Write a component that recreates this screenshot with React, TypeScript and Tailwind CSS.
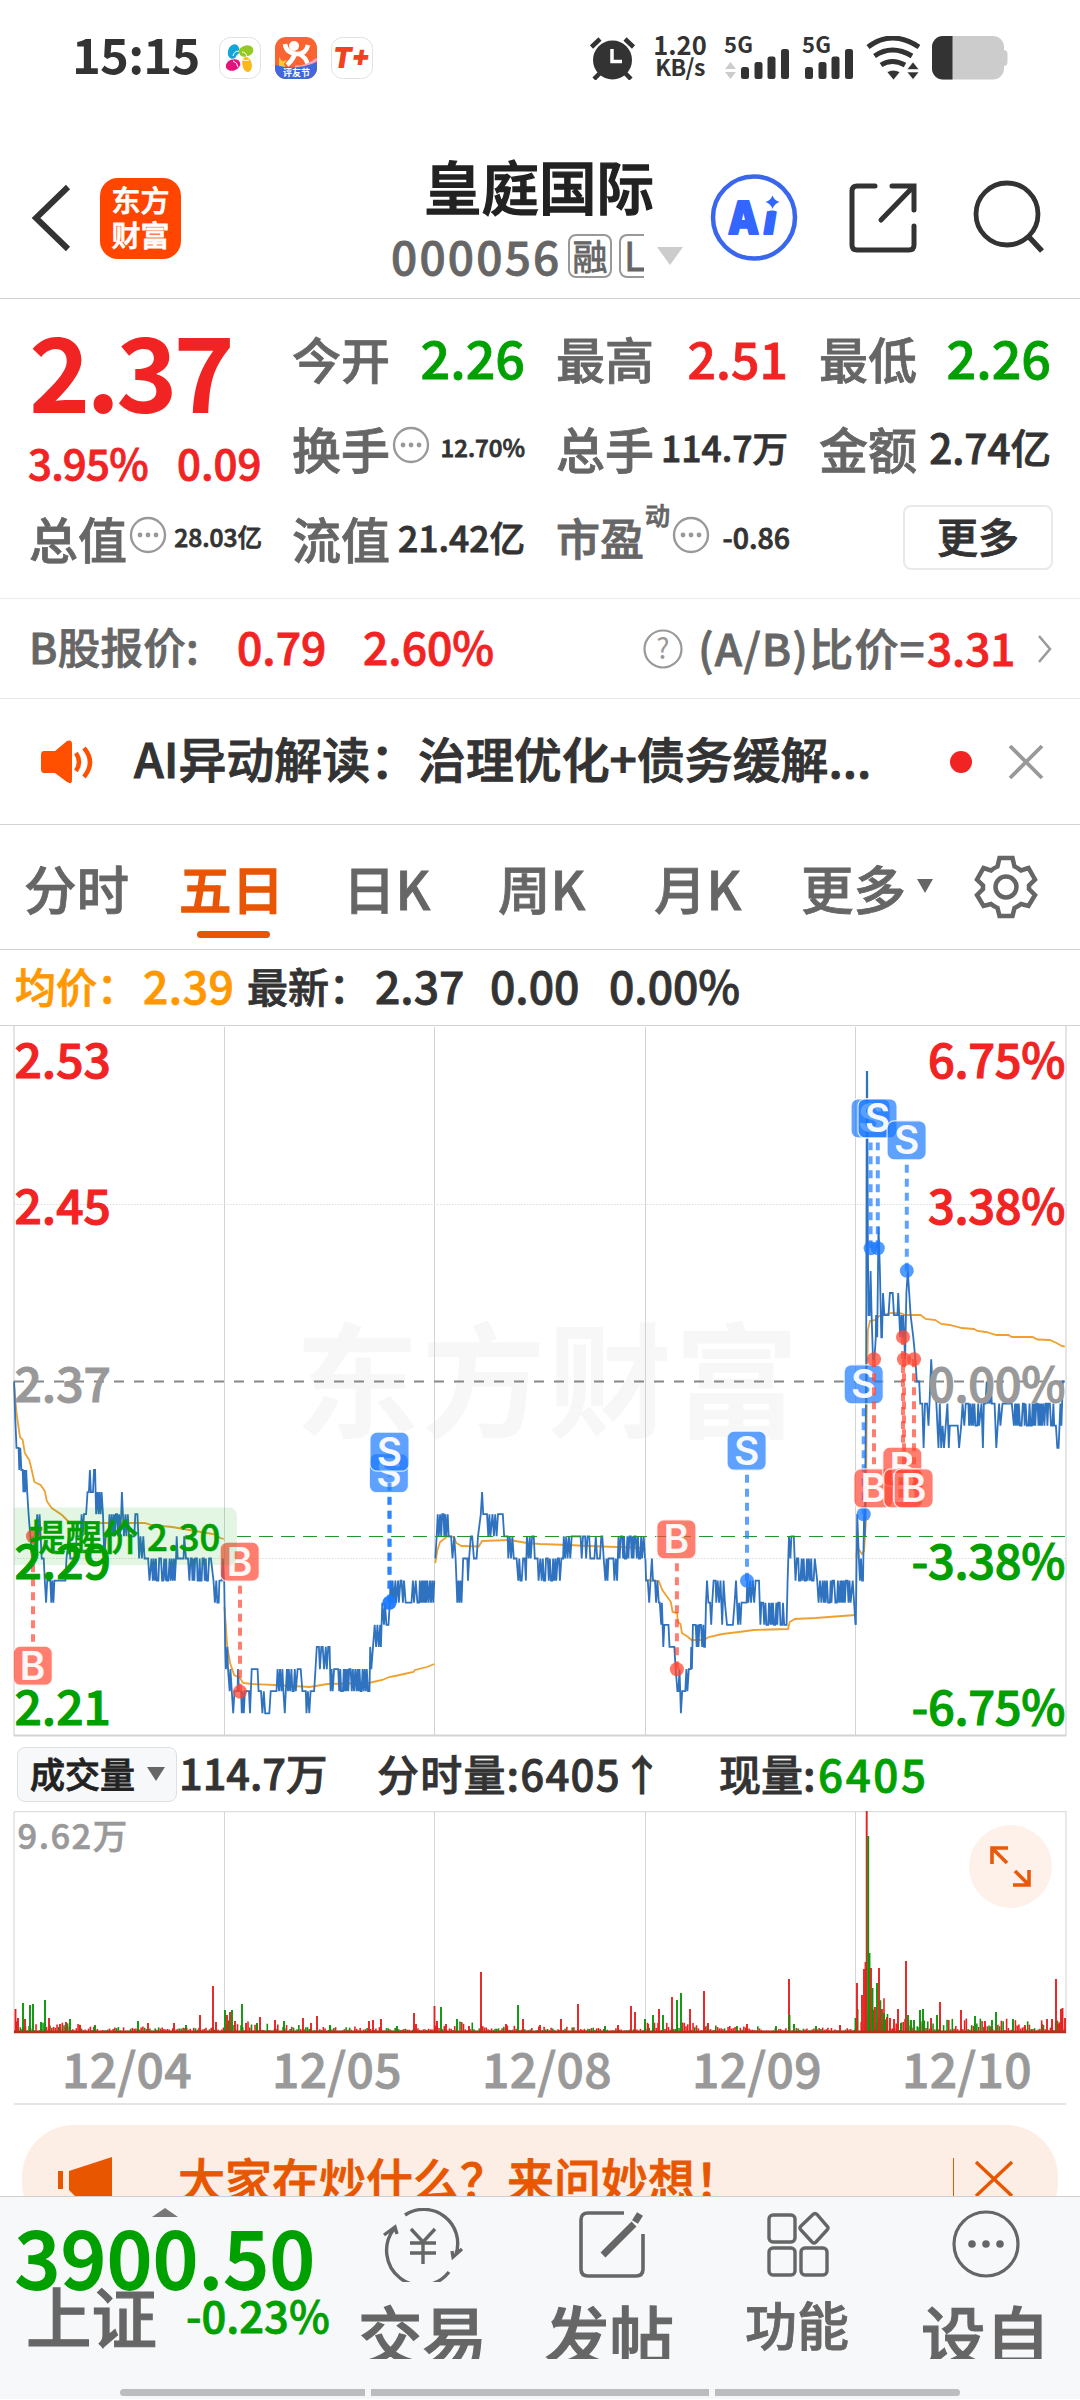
import React from "react";

type Pt = [number, number];

// horizontal chart unit (price series x values) in pixels
const UNIT = 1080 / 3136;
const MID = 1568;

const rand = (n: number) => Math.abs(Math.sin(n * 12.9898) * 43758.5453) % 1;

// price flicking between two neighbouring cents
const zig = (from: number, to: number, a: number, b: number): Pt[] => {
	const out: Pt[] = [];
	let top = true;
	let x = from;
	while (x <= to) {
		const y = top ? a : b;
		out.push([x, y]);
		const r = rand(x + a);
		if (r > 0.78 && x + 4 <= to) {
			x += 3 + (r - 0.78) * 12;
			out.push([Math.min(x, to), y]);
		}
		x += 2.2 + rand(x * 3 + b) * 1.6;
		top = !top;
	}
	return out;
};

const right = (pts: Pt[]): Pt[] => pts.map(([x, y]) => [x + MID, y]);

// [x, cents below 2.37]
const day1: Pt[] = [
	[41, 0], [44, 1.6], [48, 3], [54, 3], [56, 4], [59, 3], [62, 4], [66, 4], [68, 5], [71, 4], [73, 5], [76, 4],
	[79, 5], [83, 6], [88, 7], [93, 8], [104, 7], [108, 6], [112, 7], [115, 6], [118, 7], [121, 8], [127, 8],
	[130, 9], [134, 10], [137, 9], [146, 9], [149, 10], [152, 9], [155, 10], [158, 9], [190, 9], [193, 8],
	[200, 7], [204, 8], [220, 8], [222, 7], [234, 7], [237, 6], [240, 7], [244, 6], [250, 6], [254, 5],
	[258, 5], [261, 4], [264, 5], [270, 5], [273, 4], [276, 4], [279, 6], [283, 5], [286, 6], [289, 5],
	[292, 6], [295, 5], [299, 6], [303, 8], [307, 7], [315, 7],
	...zig(318, 350, 6, 7), [352, 6], [354, 5], [357, 6], [360, 7], [364, 6], [367, 7], [371, 6], [375, 7],
	[390, 7], [393, 6], [399, 6], [402, 7], [404, 8], [408, 7], [412, 8], [416, 7], [420, 8], [430, 8],
	[434, 9], [440, 8], ...zig(444, 508, 9, 8), [511, 8], [513, 7], [516, 8], [533, 8], [535, 7], [540, 8], [546, 8],
	...zig(550, 614, 9, 8), [620, 9], [624, 10], [628, 9], [631, 10], [635, 10], [637, 9], [644, 9], [647, 8], [650, 9],
];

const day2: Pt[] = [
	[651, 9], [654, 12], [656, 13], [660, 12], [662, 13], [667, 14], [669, 13], [673, 14], [677, 15], [681, 14],
	[690, 14], [691, 13], [694, 14], [700, 14], [702, 15], [705, 14], [708, 15], [711, 14], [723, 14], [726, 15],
	[731, 13], [736, 13], [740, 13], [748, 13], [751, 14], [758, 14], [762, 15], [766, 14], [770, 15], [782, 15],
	[786, 14], [803, 14], [806, 13], [810, 14], [813, 13], [817, 14], [820, 13], [823, 14], [827, 15], [830, 14],
	...zig(833, 860, 13, 14), [864, 13], [873, 13], [878, 14], [888, 14], [890, 15], [894, 14], [898, 15], [902, 14],
	[912, 14], [916, 13], [920, 12], [926, 12], [929, 13], [933, 12], [937, 12], [941, 13], [946, 12], [949, 13],
	[953, 12], [957, 12], [960, 14], [963, 13], [966, 14], [970, 13], [982, 13], ...zig(985, 1071, 14, 13),
	[1073, 14], [1075, 12], [1078, 13], [1083, 12], [1088, 11], [1092, 12], [1096, 11], [1100, 12], [1104, 11],
	[1106, 12], [1110, 10], [1115, 11], [1118, 10], [1122, 11], [1128, 11], [1132, 10], [1134, 9], [1137, 10],
	[1140, 9], [1143, 10], [1148, 9], [1150, 10], [1156, 9], [1158, 10], [1163, 9], [1166, 9], [1170, 10], [1173, 9],
	[1178, 10], [1195, 10], [1199, 9], [1202, 10], [1207, 9], [1212, 10], [1217, 10], ...zig(1219, 1256, 9, 10), [1258, 10], [1261, 9],
];

const day3: Pt[] = [
	[1264, 8], [1268, 7], [1271, 6], [1274, 7], [1278, 6], [1281, 7], [1284, 6], [1288, 6], [1290, 7], [1293, 6],
	[1296, 7], [1300, 6], [1303, 7], [1310, 7], [1314, 8], [1319, 7], [1323, 8], [1328, 10], [1331, 9], [1334, 10],
	[1337, 9], [1340, 10], [1345, 8], [1357, 8], [1359, 9], [1362, 8], [1367, 7], [1371, 7], [1376, 8], [1384, 8],
	[1388, 7], [1396, 6], [1400, 5], [1403, 6], [1414, 6], [1418, 7], [1421, 6], [1424, 7], [1430, 6], [1434, 7],
	[1438, 6], [1442, 7], [1446, 6], [1460, 6], [1464, 7], [1474, 7], [1476, 8], [1480, 7], [1484, 8], [1488, 7],
	[1492, 8], [1500, 8], [1505, 9], [1508, 8], [1511, 9], [1515, 9], [1519, 8], [1524, 8], [1527, 9], [1530, 7],
	[1535, 8], [1538, 7], [1541, 8], [1545, 7], [1550, 7], [1553, 8], [1561, 8], [1564, 9],
	...right([
		[1, 8], ...zig(5, 60, 9, 8), [62, 8], [67, 8], [69, 7], [73, 8], [76, 7], [80, 8], [84, 7], [88, 8], [92, 7],
		[118, 7], [121, 8], [125, 7], [131, 7], [134, 8], [138, 7], [143, 7], [146, 8], [158, 8], [162, 7], [166, 8],
		[174, 8], [178, 7], [181, 7], [185, 8], [190, 9], [193, 8], [196, 9], [199, 8], [213, 8], [216, 9], [220, 8],
		[224, 9], [228, 7], ...zig(231, 300, 8, 7), [301, 7], [305, 8],
	]),
];

const day4: Pt[] = right([
	[306, 8], [308, 9], [313, 9], [317, 10], [321, 9], [325, 8], [328, 9], [334, 9], [337, 10], [341, 9], [345, 10],
	[348, 10], [352, 11], [354, 10], [358, 12], [361, 11], [373, 11], [376, 12], [390, 12], [394, 13], [399, 14],
	[402, 14], [405, 13], [409, 15], [413, 14], [422, 14], [425, 13], [428, 14], [432, 13], [438, 13], [439, 12],
	[441, 13], [444, 11], [452, 11], ...zig(455, 478, 12, 11), [479, 12], [482, 10], [485, 9], [489, 10], [494, 10],
	[497, 11], [500, 10], [504, 9], [510, 9], [512, 10], [516, 9], [520, 10], [524, 9], [529, 11], [533, 9],
	[537, 10], [543, 11], [560, 11], [565, 10], [569, 9], [572, 10], [575, 11], [578, 10], [582, 11], [585, 10],
	[600, 10], [602, 9], [605, 10], [610, 9], [613, 10], [618, 9], [622, 10], [626, 9], [636, 9], [640, 11],
	[643, 10], [648, 10], ...zig(651, 712, 11, 10), [716, 11], [719, 9], [721, 8], [723, 7], [727, 8], [730, 7],
	[737, 7], [742, 9], [746, 8], [750, 8], ...zig(752, 801, 9, 8), [805, 9], [809, 10], [813, 9],
	[817, 10], ...zig(821, 905, 9, 10), [908, 9], [912, 10], [916, 11],
]);

const day5: Pt[] = right([
	[917, 11], [921, 6], [926, 8], [929, 9], [932, 8], [935, 9], [938, 9], [941, 6], [943, 7], [947, 0], [949, -14],
	[950, -14], [952, -6], [954, -3], [957, -3], [960, -5], [963, -3], [967, -1], [971, -1], [975, -2], [976, -3], [979, -2],
	[983, -7], [987, -5], [991, -2], [993, -2], [996, -4], [1000, -3], [1012, -3], [1016, -4], [1024, -4],
	[1028, -3], [1038, -3], [1040, -4], [1043, -3], [1046, -2], [1049, -3], [1053, -2], [1055, -3], [1060, -1], [1064, -4],
	[1068, -5], [1072, -4], [1076, -3], [1084, -2], [1090, -1], [1094, 0], [1101, 0], [1104, 1], [1110, 1],
	[1114, 3], [1118, 1], [1124, 1], [1128, 2], [1131, 1], [1136, -1], [1139, 0], [1146, 0], [1151, 1], [1154, 2],
	[1157, 3], [1161, 1], [1165, 3], [1169, 2], [1173, 3], [1178, 2], [1183, 1], [1187, 3], [1190, 2], [1213, 2], [1217, 3],
	[1223, 2], [1227, 1], [1232, 2], [1236, 1], [1244, 1], ...zig(1246, 1276, 2, 1), [1282, 1], [1286, 3], [1289, 1],
	[1294, 1], [1297, 0], [1300, 1], [1303, 0], [1306, 1], [1309, 0], [1312, 1], [1320, 1], [1325, 3], [1329, 2], [1333, 1], [1337, 2],
	[1343, 1], [1370, 1], ...zig(1376, 1494, 2, 1), [1498, 2], [1502, 3], [1506, 3], [1511, 1], [1514, 2], [1518, 0],
	[1524, 0],
]);

// [x, y pixel] of the average price
const avg: Pt[][] = [
	[[41, 1384], [48, 1413], [58, 1437], [66, 1440], [72, 1453], [85, 1460], [92, 1470], [100, 1482], [118, 1485], [130, 1491], [136, 1501], [150, 1508], [180, 1515], [200, 1522], [300, 1523], [420, 1523], [440, 1525], [500, 1527], [550, 1530], [600, 1533], [620, 1534], [640, 1538], [650, 1539]],
	[[652, 1607], [660, 1647], [668, 1663], [680, 1675], [697, 1678], [706, 1683], [730, 1684], [800, 1685], [900, 1687], [950, 1684], [1070, 1683], [1110, 1680], [1130, 1677], [1160, 1675], [1200, 1672], [1205, 1670], [1240, 1667], [1261, 1664]],
	[[1264, 1563], [1270, 1550], [1278, 1542], [1300, 1536], [1318, 1537], [1325, 1543], [1340, 1546], [1390, 1546.5], [1400, 1541], [1480, 1540], [1530, 1543], [1568, 1544], [1650, 1545], [1710, 1546], [1868, 1548]],
	right([[308, 1580], [345, 1581], [355, 1590], [380, 1602], [385, 1612], [398, 1613], [400, 1622], [408, 1624], [412, 1633], [430, 1637], [440, 1640], [476, 1640], [490, 1637], [530, 1634], [600, 1631], [620, 1630], [720, 1629], [725, 1622], [740, 1619], [800, 1618], [916, 1615]]),
	right([[918, 1558], [921, 1547], [935, 1554], [941, 1551], [946, 1523], [949, 1400], [952, 1330], [958, 1321], [975, 1320], [985, 1316], [1020, 1313], [1050, 1313.5], [1060, 1315], [1105, 1315], [1120, 1319], [1148, 1320], [1165, 1324], [1190, 1325], [1225, 1328], [1260, 1329], [1270, 1331], [1295, 1332], [1325, 1335], [1360, 1335], [1370, 1337], [1430, 1337], [1445, 1339.5], [1480, 1340], [1500, 1343], [1515, 1346], [1524, 1346.5]]),
];

const pricePath = (pts: Pt[]) =>
	pts.map(([x, n]) => `${(x * UNIT).toFixed(1)},${(1381.5 + n * 22.12).toFixed(1)}`).join(" ");
const avgPath = (pts: Pt[]) => pts.map(([x, y]) => `${(x * UNIT).toFixed(1)},${y}`).join(" ");

// kind, dot x, dot y, badge x, badge y
const trades: [string, number, number, number, number][] = [
	["B", 33, 1536.3, 32.7, 1665.7],
	["B", 240, 1691.7, 239.7, 1561.7],
	["S", 389.5, 1602.7, 388.9, 1473.2],
	["S", 389.5, 1602.7, 389.5, 1451.7],
	["B", 676.9, 1669.3, 676.4, 1539.3],
	["S", 747, 1580.7, 746.6, 1450.7],
	["S", 870.6, 1248.3, 870.6, 1118.4],
	["S", 877.8, 1248.3, 877.5, 1118.4],
	["S", 906.8, 1270.7, 906.6, 1140.3],
	["S", 863.7, 1514.3, 863.7, 1384.3],
	["B", 874, 1359.3, 873.4, 1488.3],
	["B", 903, 1337, 902.3, 1466.7],
	["B", 904, 1359.3, 903.3, 1488.3],
	["B", 914, 1359.3, 913.6, 1488.3],
];

const Trade = ({ t }: { t: [string, number, number, number, number] }) => {
	const [kind, dx, dy, bx, by] = t;
	const color = kind === "S" ? "#1b79ff" : "#ff4733";
	const off = by < dy ? 24 : -24;
	return (
		<g>
			<line x1={dx} y1={dy} x2={dx} y2={by + off} stroke={color} strokeOpacity="0.7" strokeWidth="4" strokeDasharray="8 6" />
			<circle cx={dx} cy={dy} r="7" fill={color} fillOpacity="0.75" />
			<rect x={bx - 19.5} y={by - 19.5} width="39" height="39" rx="7" fill={color} fillOpacity="0.7" stroke="#fff" strokeOpacity="0.8" strokeWidth="1.2" />
			<text x={bx} y={by + 14} textAnchor="middle" fontFamily="Inter, sans-serif" fontSize="39" fontWeight="600" fill="#fff" fillOpacity="0.95">
				{kind}
			</text>
		</g>
	);
};

const axis: [string, number, string][] = [
	["2.53", 1077.7, "#f12323"],
	["2.45", 1223.5, "#f12323"],
	["2.37", 1402, "#999"],
	["2.29", 1579, "#00a000"],
	["2.21", 1725, "#00a000"],
];
const axisRight = ["6.75%", "3.38%", "0.00%", "-3.38%", "-6.75%"];

const PriceChart = () => (
	<svg className="block" width="1080" height="711" viewBox="0 1026 1080 711">
		<text x="295" y="1428" fontSize="124" letterSpacing="2.5" fontWeight="700" fill="#f7f7f7">
			东方财富
		</text>
		<g stroke="#d3d3d3" fill="none">
			<path d="M14 1026V1736M1066 1026V1736" strokeWidth="1.5" stroke="#ddd" />
			<path d="M224.5 1027V1736M434.5 1027V1736M645.5 1027V1736M855.5 1027V1736" />
			<path d="M14 1735.5H1066" strokeWidth="2" />
			<path d="M14 1204.5H1066M14 1558.5H1066" strokeDasharray="1.5 1.5" stroke="#ddd" />
		</g>
		<path d="M14 1381.5H1066" stroke="#888" strokeWidth="2" strokeDasharray="10 10" />
		{avg.map((d, i) => (
			<polyline key={i} points={avgPath(d)} fill="none" stroke="#eea12e" strokeWidth="1.8" />
		))}
		{[day1, day2, day3, day4, day5].map((d, i) => (
			<polyline key={i} points={pricePath(d)} fill="none" stroke="#2f72bf" strokeWidth="1.8" />
		))}
		<path d="M237 1536.5H1066" stroke="#1f9a2a" strokeWidth="1.2" strokeDasharray="14 8" />
		{trades.map((t, i) => (
			<Trade key={i} t={t} />
		))}
		<path d="M14 1507.5H229a8 8 0 0 1 8 8V1557a8 8 0 0 1-8 8H14Z" fill="#00a000" fillOpacity="0.11" />
		<g fontWeight="500" fontSize="48" strokeWidth="1.1">
			<text x="29" y="1550.5" fontSize="36.6" fill="#00a000" stroke="#00a000" strokeWidth="0.6">
				提醒价 2.30
			</text>
			{axis.map(([label, y, fill], i) => (
				<g key={label} fill={fill} stroke={fill}>
					<text x="14.5" y={y}>{label}</text>
					<text x="1065" y={y} textAnchor="end" fontSize="47" letterSpacing="-0.3">{axisRight[i]}</text>
				</g>
			))}
		</g>
	</svg>
);

// [x, height, green]
const spikes: [number, number, number][] = [
	[15.5, 24, 0], [18, 15, 0], [23, 30, 1], [25, 14, 0], [30, 28, 1], [33, 29, 1], [41, 11, 1], [45, 33, 1], [49, 15, 0],
	[60, 9, 0], [66, 11, 0], [70, 14, 1], [80, 8, 0], [95, 8, 1], [138, 12, 1], [148, 10, 0], [174, 10, 0], [186, 8, 1],
	[200, 18, 0], [213, 47, 0], [216, 11, 0], [225, 23, 1], [227, 18, 0], [230, 21, 0], [232, 23, 1], [235, 12, 0],
	[242, 29, 1], [246, 10, 0], [257, 10, 1], [260, 16, 0], [275, 13, 0], [284, 12, 1], [303, 15, 0], [311, 10, 0],
	[317, 17, 0], [330, 8, 1], [369, 12, 0], [373, 13, 0], [381, 14, 0], [397, 7, 1], [414, 20, 0], [416, 9, 0],
	[434.5, 27, 0], [437, 12, 0], [441, 26, 1], [446, 9, 0], [457, 14, 1], [469, 7, 0], [481, 61, 0], [506, 9, 0],
	[518, 28, 1], [523, 14, 0], [540, 8, 0], [561, 14, 0], [578, 29, 0], [605, 7, 1], [618, 8, 0], [631, 27, 0], [635, 21, 0],
	[645, 14, 1], [648, 9, 0], [653, 18, 1], [659, 24, 0], [663, 18, 1], [672, 36, 0], [677, 33, 1], [681, 40, 1],
	[690, 24, 0], [704, 42, 0], [708, 10, 0], [737, 7, 1], [747, 9, 0], [776, 7, 1], [789, 54, 0], [789.5, 18, 1], [794, 9, 1], [816, 7, 1],
	[840, 8, 0], [855.5, 15, 1], [857, 50, 0], [862, 38, 0], [864, 64, 0], [865.5, 71, 0], [866.7, 222, 0], [868.2, 197, 1], [869.5, 80, 1],
	[871, 65, 0], [872.5, 45, 1], [875, 26, 0], [877, 50, 1], [879, 65, 0], [882, 24, 0], [884, 20, 1], [887, 16, 0],
	[890, 15, 0], [894, 14, 0], [898, 24, 0], [901, 10, 1], [906, 72, 0], [908, 18, 1], [911, 13, 1], [914, 13, 1], [920, 23, 1],
	[923, 24, 1], [931, 15, 0], [937, 18, 1], [940, 31, 0], [961, 23, 0], [975, 17, 1], [985, 12, 0], [992, 13, 1], [996, 21, 1],
	[1013, 14, 1], [1025, 8, 0], [1042, 9, 0], [1047, 14, 0], [1052, 14, 0], [1056, 54, 0], [1059, 9, 0], [1061, 24, 0], [1062.5, 25, 0], [1065, 15, 0],
];

// small bars along the baseline, higher around each open
const noise = Array.from({ length: 600 }, (_, i) => {
	const x = 15 + i * 1.752;
	const r = rand(i);
	const g = rand(i * 6.02 + 3);
	const pos = ((x - 14) % 210.4) / 210.4;
	let top = 3 + (1 - pos) * (1 - pos) * 8;
	if (x > 856) top = x < 890 ? 34 : 12;
	return { x, h: 2.5 + r * r * top, green: g > 0.68 };
});

const VolumeChart = () => (
	<svg className="block" width="1080" height="224" viewBox="0 1811 1080 224">
		<g stroke="#d6d6d6" fill="none">
			<path d="M14 1811.5H1066V2033M14 1811.5V2033" strokeWidth="1.3" stroke="#ddd" />
			<path d="M224.5 1812V2033M434.5 1812V2033M645.5 1812V2033M855.5 1812V2033" />
		</g>
		{noise.map((b, i) => (
			<path key={i} d={`M${b.x} 2033v${-b.h}`} stroke={b.green ? "#0a960a" : "#e82020"} strokeWidth="1.6" />
		))}
		{spikes.map(([x, h, green], i) => (
			<path key={i} d={`M${x} 2033v${-h}`} stroke={green ? "#0a960a" : "#e82020"} strokeWidth="1.9" />
		))}
		<path d="M14 2032H1066" stroke="#b5301c" strokeWidth="2.4" />
		<text x="17.5" y="1849" fontWeight="500" fontSize="34.5" letterSpacing="1.5" fill="#999" stroke="#999" strokeWidth="0.6">
			9.62万
		</text>
		<circle cx="1010.5" cy="1866.5" r="41.5" fill="#fdf1e9" />
		<path d="M992 1864V1848H1008M992 1848L1007 1863M1029 1870V1885H1013M1029 1885L1015 1871" fill="none" stroke="#e8590c" strokeWidth="3.6" />
	</svg>
);

const Bars = () => (
	<g fill="#333">
		<rect x="0" y="31" width="8" height="12" rx="2.5" />
		<rect x="13.5" y="26" width="8" height="17" rx="2.5" />
		<rect x="26.5" y="20.5" width="8" height="22.5" rx="2.5" />
		<rect x="40" y="13" width="8" height="30" rx="2.5" />
	</g>
);

const StatusBar = () => (
	<div className="flex h-[115px] items-center text-[#333] [-webkit-text-stroke:0px]">
		<div className="ml-[72px] w-[147px] text-[49px] font-bold tracking-[-0.8px] -mt-[10px]">15:15</div>
		<svg width="155" height="42" viewBox="0 0 155 42">
			<g strokeWidth="1" stroke="#e2e2e2">
				<rect x="0.5" y="0.5" width="41" height="41" rx="11" fill="#fff" />
				<rect x="112.5" y="0.5" width="41" height="41" rx="11" fill="#fff" />
			</g>
			<ellipse cx="14.5" cy="14.5" rx="5.5" ry="7.5" transform="rotate(20 14.5 14.5)" fill="#12a5d8" />
			<ellipse cx="27" cy="14" rx="7.5" ry="5.5" transform="rotate(-15 27 14)" fill="#95c921" />
			<ellipse cx="14" cy="28" rx="7.5" ry="5.5" transform="rotate(-20 14 28)" fill="#e5127d" />
			<ellipse cx="28" cy="27.5" rx="4.8" ry="7.5" transform="rotate(-10 28 27.5)" fill="#fbb91b" />
			<path d="M14 19q1-5 6-5M17 20q1-3 4-3M23 15q4 0 5 5M14 24q4 1 5 6M22 25q0 3 2 4M24 23q3 1 6 0" fill="none" stroke="#fff" strokeWidth="1" />
			<clipPath id="app"><rect x="56" width="42" height="42" rx="11" /></clipPath>
			<g clipPath="url(#app)">
				<rect x="56" width="42" height="42" fill="#f96432" />
				<path d="M66 7q1 9 12 10q9 0 11-9M76 17q-3 7-8 11M80 17q7 3 9 11" stroke="#fff" strokeWidth="4.5" fill="none" />
				<circle cx="75" cy="9" r="5" fill="#fff" />
				<path d="M60 20l3 4 5-1-3 4 2 4-7-1Z" fill="#ffc93a" />
				<path d="M76 30q13 0 22-8" stroke="#f6a1c6" strokeWidth="3" fill="none" />
				<path d="M56 28q22 6 42-3v17H56Z" fill="#4167dd" />
				<text x="77.5" y="39" textAnchor="middle" fontSize="9" fontWeight="700" fill="#fff">评友节</text>
			</g>
			<text x="114" y="31" fontFamily="Inter, sans-serif" fontSize="29" fontWeight="900" fontStyle="italic" fill="#f4401e" textLength="37" lengthAdjust="spacingAndGlyphs">T+</text>
		</svg>
		<svg className="ml-[216px]" width="46" height="44" viewBox="0 0 46 44">
			<circle cx="22.5" cy="24" r="19.5" fill="#333" />
			<path d="M1.5 11L10 3M43.5 11L35 3M4 43L11 36M41 43L34 36" stroke="#333" strokeWidth="4.5" fill="none" />
			<path d="M22 13V25.5H32" stroke="#fff" strokeWidth="3.5" fill="none" />
		</svg>
		<div className="ml-[17px] flex w-[54px] flex-col text-center text-[23px] font-bold">
			<span className="h-[23px] -mt-[6px] text-[25.5px]">1.20</span>
			<span className="mt-[1px] tracking-[-0.5px]">KB/s</span>
		</div>
		<svg className="ml-[17px]" width="66" height="44" viewBox="0 0 66 44">
			<text x="0" y="16.5" fontSize="22" fontWeight="700" fill="#333" textLength="29">5G</text>
			<path d="M1 33l5.5-7 5.5 7ZM1 36h11l-5.5 7Z" fill="#ccc" />
			<g transform="translate(17 0)"><Bars /></g>
		</svg>
		<svg className="ml-[11px]" width="56" height="44" viewBox="0 0 56 44">
			<text x="1" y="16.5" fontSize="22" fontWeight="700" fill="#333" textLength="29">5G</text>
			<g transform="translate(4 0)"><Bars /></g>
		</svg>
		<svg className="ml-[9px]" width="54" height="44" viewBox="0 0 54 44">
			<path d="M2 11Q26-7 53 11M8.5 20Q26 8 46 20M15 29Q26 22 39 29" fill="none" stroke="#333" strokeWidth="5" />
			<path d="M21 36q6-3.5 13 0l-6.5 8ZM41 33.5l6-7.5 6 7.5ZM41 36h12l-6 7.5Z" fill="#333" stroke="#fff" strokeWidth="0.6" />
		</svg>
		<svg className="ml-[12px]" width="76" height="44" viewBox="0 0 76 44">
			<rect x="66" y="14" width="9.5" height="16" rx="4" fill="#ccc" />
			<rect x="0" y="0" width="72" height="43.5" rx="11" fill="#ccc" />
			<path d="M20.5 0H11A11 11 0 0 0 0 11V32.5A11 11 0 0 0 11 43.5H20.5Z" fill="#333" />
		</svg>
	</div>
);

const Header = () => (
	<div className="flex h-[184px] border-b border-[#d3d3d3]">
		<svg className="ml-[30px] mt-[69px]" width="42" height="68" viewBox="0 0 42 68">
			<path d="M38 3L6 34L38 65" fill="none" stroke="#333" strokeWidth="6" />
		</svg>
		<div className="ml-[28px] mt-[63px] flex h-[81px] w-[81px] flex-col items-center justify-center rounded-[18px] bg-[#ff4500] pb-[4px] text-[29px] font-medium leading-[35px] text-white">
			<span>东方</span>
			<span>财富</span>
		</div>
		<div className="ml-[209px] w-[310px] pt-[42px]">
			<div className="ml-[34px] whitespace-nowrap text-[57.5px] font-medium text-[#222] [-webkit-text-stroke:1.4px]">皇庭国际</div>
			<div className="mt-[19px] flex items-center text-[#666]">
				<span className="ml-[1px] w-[177px] text-[46px] font-medium tracking-[2.2px] -mt-[2px]">000056</span>
				<span className="flex h-[44px] w-[44px] items-center justify-center rounded-[8px] border-2 border-[#999] pb-[3px] text-[35px]">融</span>
				<span className="ml-[7px] flex h-[44px] w-[25px] items-center overflow-hidden rounded-l-[8px] border-2 border-r-0 border-[#999] pb-[3px] pl-[3px] text-[39px]">L</span>
				<svg className="ml-[13px]" width="26" height="18"><path d="M0 0H26L13 18Z" fill="#ccc" /></svg>
			</div>
		</div>
		<svg className="ml-[10px] mt-[58px]" width="88" height="88" viewBox="0 0 88 88">
			<circle cx="44" cy="44.5" r="41" fill="none" stroke="#3a66ee" strokeWidth="4.5" />
			<text x="18" y="61" fontFamily="Inter, sans-serif" fontSize="46" fontWeight="900" fill="#3366ff" stroke="#3366ff" strokeWidth="2" strokeLinejoin="round">
				<tspan textLength="31" lengthAdjust="spacingAndGlyphs">A</tspan>
				<tspan x="54" fontSize="40" fontStyle="italic">i</tspan>
			</text>
			<rect x="52" y="18" width="20" height="19.5" fill="#fff" />
			<path d="M62.5 22.5q2 5 7 6.5q-5 1.5-7 7q-2-5.5-7-7q5-1.5 7-6.5Z" fill="#3366ff" />
		</svg>
		<svg className="ml-[50px] mt-[67px]" width="72" height="74" viewBox="0 0 72 74">
			<path d="M27 4H9Q4 4 4 9V63Q4 68 9 68H61Q66 68 66 63V44M44 4H66V28M65 5L33 38" fill="none" stroke="#333" strokeWidth="5" strokeLinecap="round" />
		</svg>
		<svg className="ml-[53px] mt-[65px]" width="74" height="74" viewBox="0 0 74 74">
			<circle cx="34" cy="34" r="31" fill="none" stroke="#333" strokeWidth="4.8" />
			<path d="M56 57L69 71" stroke="#333" strokeWidth="5.5" />
		</svg>
	</div>
);

const Dots = ({ className }: { className: string }) => (
	<svg className={className} width="38" height="38" viewBox="0 0 38 38">
		<circle cx="19" cy="19" r="17" fill="none" stroke="#999" strokeWidth="2.4" />
		<circle cx="11" cy="19" r="2.4" fill="#999" />
		<circle cx="19" cy="19" r="2.4" fill="#999" />
		<circle cx="27" cy="19" r="2.4" fill="#999" />
	</svg>
);

const Quote = () => (
	<div className="h-[300px] border-b border-[#ececec] pl-[29px] pt-[13px] font-medium text-[#666]">
		<div className="flex h-[180px]">
			<div className="w-[263px] text-[#f12323]">
				<div className="mt-[4px] whitespace-nowrap text-[104px] font-bold tracking-[-4px] [-webkit-text-stroke:0px]">2.37</div>
				<div className="mt-[21px] flex text-[42px]">
					<span className="-ml-[1px] w-[149px] tracking-[-0.8px]">3.95%</span>
					<span>0.09</span>
				</div>
			</div>
			<div>
				<div className="flex h-[90px] items-center gap-[31px] text-[49px]">
					<div className="flex w-[233px] items-center justify-between">
						今开<span className="text-[52px] text-[#00a000]">2.26</span>
					</div>
					<div className="flex w-[232px] items-center justify-between">
						最高<span className="text-[50px] text-[#f12323]">2.51</span>
					</div>
					<div className="flex w-[232px] items-center justify-between">
						最低<span className="text-[52px] text-[#00a000]">2.26</span>
					</div>
				</div>
				<div className="flex h-[90px] items-center gap-[31px] text-[49px]">
					<div className="flex w-[233px] items-center">
						换手
						<Dots className="ml-[2px] -mt-[5px]" />
						<span className="ml-auto text-[24px] text-[#333]">12.70%</span>
					</div>
					<div className="flex w-[232px] items-center justify-between">
						总手<span className="text-[35.5px] text-[#333]">114.7万</span>
					</div>
					<div className="flex w-[232px] items-center justify-between">
						金额<span className="text-[40.5px] text-[#333]">2.74亿</span>
					</div>
				</div>
			</div>
		</div>
		<div className="flex h-[90px] items-center text-[49px]">
			<div className="flex w-[233px] items-center">
				总值
				<Dots className="ml-[2px] -mt-[5px]" />
				<span className="ml-auto text-[24.5px] text-[#333]">28.03亿</span>
			</div>
			<div className="ml-[30px] flex w-[233px] items-center justify-between">
				流值<span className="text-[35.5px] text-[#333]">21.42亿</span>
			</div>
			<div className="ml-[31px] flex w-[234px] items-center text-[44px]">
				市盈
				<span className="-mt-[46px] ml-[1px] text-[25px]">动</span>
				<Dots className="ml-[2px] -mt-[5px]" />
				<span className="ml-auto text-[28.5px] text-[#333]">-0.86</span>
			</div>
			<div className="ml-[113px] flex h-[65px] w-[150px] items-center justify-center rounded-[8px] border-2 border-[#e9e9e9] pb-[4px] text-[41px] text-[#333]">
				更多
			</div>
		</div>
	</div>
);

const BShare = () => (
	<div className="flex h-[100px] items-center whitespace-nowrap border-b border-[#e6e6e6] pb-[4px] font-medium text-[#666]">
		<span className="ml-[29px] w-[208px] text-[42.5px] tracking-[0.3px]">B股报价:</span>
		<span className="w-[126px] text-[44.5px] text-[#f12323]">0.79</span>
		<span className="w-[280px] text-[44.5px] text-[#f12323]">2.60%</span>
		<svg className="mt-[4px]" width="40" height="40" viewBox="0 0 40 40">
			<circle cx="20" cy="20" r="18.5" fill="none" stroke="#999" strokeWidth="2.2" />
			<text x="20" y="30" textAnchor="middle" fontSize="28" fontWeight="400" fill="#999">?</text>
		</svg>
		<span className="ml-[15px] w-[229px] text-[44px] tracking-[1.2px]">(A/B)比价=</span>
		<span className="w-[111px] text-[44px] text-[#f12323]">3.31</span>
		<svg className="mt-[4px]" width="14" height="30" viewBox="0 0 14 30">
			<path d="M1 2L12 15L1 28" fill="none" stroke="#999" strokeWidth="2.5" />
		</svg>
	</div>
);

const Notice = () => (
	<div className="flex h-[126px] items-center border-b border-[#d3d3d3] font-medium text-[#333]">
		<svg className="ml-[40px]" width="56" height="46" viewBox="0 0 56 46">
			<path d="M4 12H15L27 2Q32 0 32 5V41Q32 46 27 43L15 34H4Q1 34 1 30V16Q1 12 4 12Z" fill="#ff5000" />
			<path d="M36 14Q42 23 36 32M44 9Q56 23 44 38" fill="none" stroke="#ff5000" strokeWidth="4.5" />
		</svg>
		<span className="ml-[38px] w-[816px] whitespace-nowrap pb-[7px] text-[47.9px] [-webkit-text-stroke:1px]">AI异动解读：治理优化+债务缓解...</span>
		<span className="h-[22px] w-[22px] rounded-full bg-[#f12323]" />
		<svg className="ml-[36px]" width="36" height="36" viewBox="0 0 36 36">
			<path d="M2 2L34 34M34 2L2 34" stroke="#999" strokeWidth="3.8" />
		</svg>
	</div>
);

const Tabs = () => (
	<div className="flex h-[125px] items-center border-b border-[#d3d3d3] text-[52.5px] font-medium text-[#666]">
		<span className="ml-[24px] w-[155px]">分时</span>
		<span className="relative w-[164px] text-[#e85505] [-webkit-text-stroke:1.4px]">
			五日
			<i className="absolute left-[18px] top-[70px] h-[7px] w-[73px] rounded-full bg-[#e85505]" />
		</span>
		<span className="w-[155px]">日K</span>
		<span className="w-[156px]">周K</span>
		<span className="w-[147px]">月K</span>
		<span className="w-[116px]">更多</span>
		<svg className="-mt-[3px]" width="16" height="14"><path d="M0 0H16L8 14Z" fill="#666" /></svg>
		<svg className="ml-[41px]" width="64" height="64" viewBox="0 0 64 64" fill="none" stroke="#666" strokeWidth="4.5">
			<circle cx="32" cy="32" r="10.5" />
			<path d="M25.5 3H38.5L40.5 11.5Q44 13 47 15.5L54.5 13L61 24.5L55 30.5V34L61 40L54.5 51L47 49Q44 51.5 40.5 53L38.5 61H25.5L23.5 53Q20 51.5 17 49L9.5 51L3 40L9 34V30.5L3 24.5L9.5 13L17 15.5Q20 13 23.5 11.5Z" />
		</svg>
	</div>
);

const Latest = () => (
	<div className="flex h-[76px] items-center whitespace-nowrap border-b border-[#d3d3d3] pb-[4px] text-[41px] font-medium text-[#333]">
		<span className="ml-[15px] w-[128px] text-[#ff9800]">均价：</span>
		<span className="w-[104px] text-[44.5px] tracking-[0.5px] text-[#ff9800]">2.39</span>
		<span className="w-[128px]">最新：</span>
		<span className="w-[115px] text-[44.5px]">2.37</span>
		<span className="w-[119px] text-[44.5px]">0.00</span>
		<span className="text-[44.5px]">0.00%</span>
	</div>
);

const VolumeHead = () => (
	<div className="flex h-[74px] items-center whitespace-nowrap text-[42px] font-medium text-[#333]">
		<div className="ml-[17px] flex h-[55px] w-[160px] items-center rounded-[8px] border border-[#dfe0e3] bg-[#f7f8fa] pl-[12px] pb-[3px] text-[35px] text-[#222]">
			成交量
			<svg className="ml-[12px] mt-[3px]" width="18" height="14"><path d="M0 0H18L9 14Z" fill="#666" /></svg>
		</div>
		<span className="ml-[2px] w-[198px] pb-[3px] text-[41.5px]">114.7万</span>
		<span className="w-[342px] pb-[3px] tracking-[1.2px]">分时量:6405↑</span>
		<span className="w-[99px] pb-[3px]">现量:</span>
		<span className="pb-[3px] text-[44px] tracking-[2.6px] text-[#00a000]">6405</span>
	</div>
);

const Dates = () => (
	<div className="mx-[14px] flex h-[70px] border-b-2 border-[#e4e4e4] pl-[8px] pt-[8px] text-[48px] font-medium text-[#999]">
		{["12/04", "12/05", "12/08", "12/09", "12/10"].map((d) => (
			<span key={d} className="w-[210px] shrink-0 text-center tracking-[0.4px]">{d}</span>
		))}
	</div>
);

const Banner = () => (
	<div className="h-[91px] overflow-hidden px-[22px] pt-[20px]">
		<div className="flex h-[110px] rounded-[52px] bg-[#fdeee5] text-[#e85600]">
			<svg className="ml-[35px] mt-[31px]" width="56" height="54" viewBox="0 0 56 54">
				<path d="M1 15H6V33H1ZM12 15L55 1V48H40L34 40H27L22 44L12 34Z" fill="#e85600" />
			</svg>
			<span className="ml-[65px] mt-[29px] w-[775px] whitespace-nowrap text-[47px] font-medium">大家在炒什么？来问妙想！</span>
			<span className="mt-[33px] h-[44px] w-px bg-[#e85600]" />
			<svg className="ml-[20px] mt-[36px]" width="40" height="36" viewBox="0 0 40 36">
				<path d="M2 1L38 35M38 1L2 35" stroke="#e85600" strokeWidth="3.4" />
			</svg>
		</div>
	</div>
);

const BottomNav = () => (
	<div className="flex h-[203px] flex-col border-t border-[#cfcfcf] bg-[#f7f8fa] text-[#666]">
		<div className="flex h-[162px] overflow-hidden font-medium">
			<div className="w-[360px] whitespace-nowrap">
				<svg className="ml-[152px] mt-[11px] block" width="26" height="9"><path d="M0 9H26L13 0Z" fill="#777" /></svg>
				<div className="ml-[15px] mt-[-2px] text-[79px] tracking-[1px] text-[#00a000] [-webkit-text-stroke:1.8px]">3900.50</div>
				<div className="mt-[-12px] flex">
					<span className="ml-[26px] w-[160px] text-[65.5px] [-webkit-text-stroke:1.2px]">上证</span>
					<span className="mt-[11px] text-[43.5px] text-[#00a000]">-0.23%</span>
				</div>
			</div>
			<div className="w-[187px] text-[64.5px] [-webkit-text-stroke:1.2px]">
				<svg className="ml-[20px] mt-[11px] block" width="86" height="74" viewBox="0 0 86 74" fill="none" stroke="#666" strokeWidth="3.4">
					<path d="M25 8A34 34 0 0 1 76 47M69 65A34 34 0 0 1 14 22M4 28L15 20L17 27M82 42L73 50L72 44" transform="translate(0 -1)" />
					<path d="M31 21L43 34L55 21M43 34V56M30 35H56M30 45H56" />
				</svg>
				<div className="-ml-[2px] mt-[19px]">交易</div>
			</div>
			<div className="w-[199px] text-[64.5px] [-webkit-text-stroke:1.2px]">
				<svg className="ml-[31px] mt-[11px] block" width="70" height="74" viewBox="0 0 70 74" fill="none" stroke="#666">
					<path d="M46 5H10Q3 5 3 12V61Q3 68 10 68H58Q65 68 65 61V26" strokeWidth="3.6" />
					<path d="M62 6L57 14M56 16L25 47" strokeWidth="7" />
				</svg>
				<div className="-ml-[2px] mt-[19px]">发帖</div>
			</div>
			<div className="w-[177px] text-[52px]">
				<svg className="ml-[20px] mt-[11px] block" width="66" height="74" viewBox="0 0 66 74" fill="none" stroke="#666" strokeWidth="3.4">
					<rect x="3" y="7" width="26" height="27" rx="4" />
					<rect x="3" y="40" width="26" height="27" rx="4" />
					<rect x="35" y="40" width="26" height="27" rx="4" />
					<path d="M47 6.5q2-2 4 0L61 18q2 2 0 4L50 34q-2 2-4 0L35 22q-2-2 0-4Z" />
				</svg>
				<div className="-ml-[1px] mt-[16px]">功能</div>
			</div>
			<div className="w-[157px] text-[64.5px] [-webkit-text-stroke:1.2px]">
				<svg className="ml-[28px] mt-[11px] block" width="72" height="74" viewBox="0 0 72 74">
					<circle cx="35" cy="36" r="32" fill="none" stroke="#666" strokeWidth="3.2" />
					<circle cx="21" cy="36" r="3.8" fill="#666" />
					<circle cx="35" cy="36" r="3.8" fill="#666" />
					<circle cx="49" cy="36" r="3.8" fill="#666" />
				</svg>
				<div className="-ml-[2px] mt-[19px]">设自</div>
			</div>
		</div>
		<div className="mt-[30px] flex h-[7px] justify-center gap-[6px]">
			<span className="w-[245px] rounded-l-full bg-[#bbbdbf]" />
			<span className="w-[338px] bg-[#bbbdbf]" />
			<span className="w-[245px] rounded-r-full bg-[#bbbdbf]" />
		</div>
	</div>
);

const App = () => {
	return (
		<div className="h-[2400px] w-[1080px] overflow-hidden bg-white font-['Noto_Sans_CJK_SC',sans-serif] leading-none [-webkit-text-stroke:0.8px]">
			<StatusBar />
			<Header />
			<Quote />
			<BShare />
			<Notice />
			<Tabs />
			<Latest />
			<PriceChart />
			<VolumeHead />
			<VolumeChart />
			<Dates />
			<Banner />
			<BottomNav />
		</div>
	);
};

export default App;
